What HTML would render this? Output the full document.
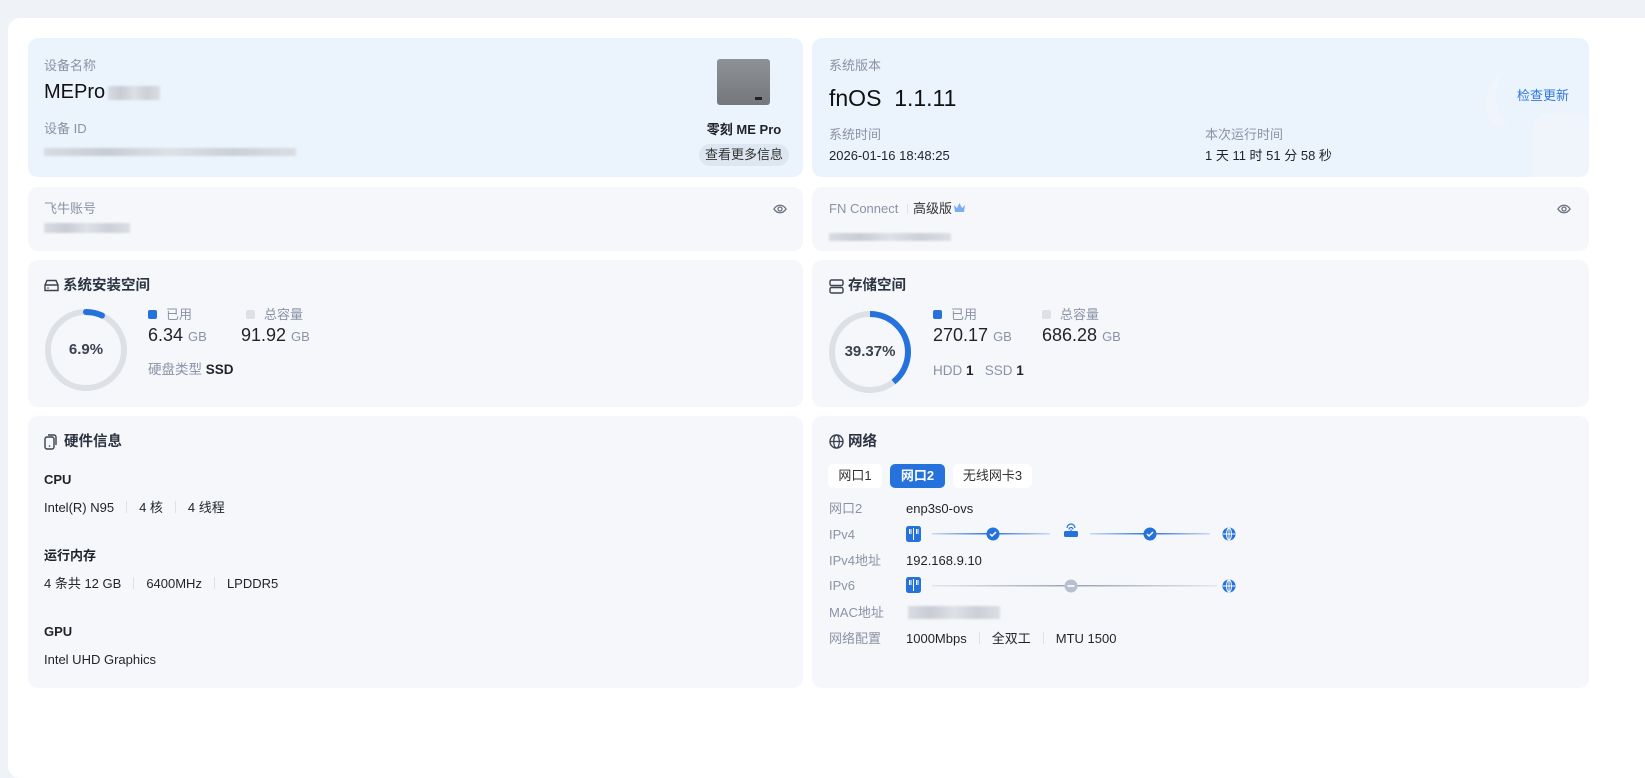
<!DOCTYPE html>
<html><head><meta charset="utf-8"><style>
*{margin:0;padding:0;box-sizing:border-box}
body{width:1645px;height:717px;background:#eff2f7;font-family:"Liberation Sans","Noto Sans CJK SC",sans-serif;color:#1f2329;position:relative;overflow:hidden}
.wrap{position:absolute;left:8px;top:18px;width:1700px;height:760px;background:#fff;border-radius:12px}
.card{position:absolute;background:#f5f7fb;border-radius:10px}
.blue{background:#ebf3fc}
.a{position:absolute;white-space:nowrap;line-height:18px}
.lbl{color:#8a93a6;font-size:13px}
.val{color:#1f2329;font-size:13px}
.ttl{font-size:14.5px;font-weight:bold;color:#2b3340}
.blur{position:absolute;height:10px;background:linear-gradient(90deg,#d6d9df,#c4c8d0,#dcdfe4,#c8ccd3,#d9dce1);filter:blur(1px);opacity:.9}
.sep{display:inline-block;width:1px;height:12px;background:#dde1e8;margin:0 12px;vertical-align:-1px}
.tab{position:absolute;top:464px;height:24px;background:#fff;border-radius:5px;font-size:13px;line-height:24px;text-align:center;color:#333}
</style></head><body>
<div class="wrap"></div>

<!-- top left -->
<div class="card blue" style="left:28px;top:38px;width:775px;height:139px"></div>
<div class="a lbl" style="left:44px;top:57px">设备名称</div>
<div class="a" style="left:44px;top:80px;font-size:20px;line-height:24px;color:#111">MEPro</div>
<div class="blur" style="left:108px;top:86px;width:52px;height:14px"></div>
<div class="a lbl" style="left:44px;top:120px">设备 ID</div>
<div class="blur" style="left:44px;top:148px;width:252px;height:8px"></div>
<div class="a" style="left:717px;top:59px;width:53px;height:46px;background:linear-gradient(#8e9196,#74777c);border-radius:3px"></div>
<div class="a" style="left:755px;top:97px;width:7px;height:3px;background:#222"></div>
<div class="a" style="left:700px;top:121px;width:88px;text-align:center;font-size:13px;font-weight:bold">零刻 ME Pro</div>
<div class="a" style="left:699px;top:144px;width:90px;height:22px;background:#dde6f1;border-radius:11px;font-size:13px;line-height:22px;text-align:center;color:#333">查看更多信息</div>

<!-- top right -->
<div class="card blue" style="left:812px;top:38px;width:777px;height:139px;overflow:hidden">
<svg style="position:absolute;left:640px;top:30px" width="140" height="110"><path d="M48 6 C30 20 28 50 45 58 L56 55 C40 45 44 20 48 6Z" fill="#f0f5fc"/><rect x="80" y="45" width="60" height="80" rx="18" fill="#f0f5fc"/></svg>
</div>
<div class="a lbl" style="left:829px;top:57px">系统版本</div>
<div class="a" style="left:829px;top:84px;font-size:23px;line-height:28px;color:#111">fnOS&nbsp;&nbsp;1.1.11</div>
<div class="a" style="left:1517px;top:87px;font-size:13px;color:#2f78e0">检查更新</div>
<div class="a lbl" style="left:829px;top:126px">系统时间</div>
<div class="a val" style="left:829px;top:147px">2026-01-16 18:48:25</div>
<div class="a lbl" style="left:1205px;top:126px">本次运行时间</div>
<div class="a val" style="left:1205px;top:147px">1 天 11 时 51 分 58 秒</div>

<!-- row 2 -->
<div class="card" style="left:28px;top:187px;width:775px;height:64px"></div>
<div class="a lbl" style="left:44px;top:200px">飞牛账号</div>
<div class="blur" style="left:44px;top:223px;width:86px"></div>
<svg class="a" style="left:773px;top:203px" width="14" height="12" viewBox="0 0 14 12"><path d="M1 6 C4 1 10 1 13 6 C10 11 4 11 1 6Z" fill="none" stroke="#6b7280" stroke-width="1.3"/><circle cx="7" cy="6" r="2" fill="none" stroke="#6b7280" stroke-width="1.3"/></svg>
<div class="card" style="left:812px;top:187px;width:777px;height:64px"></div>
<div class="a lbl" style="left:829px;top:200px">FN Connect <span class="sep" style="margin:0 5px;height:10px"></span><span style="color:#333">高级版</span></div>
<svg class="a" style="left:953px;top:202px" width="13" height="12"><path d="M1 3 L4 6 L6.5 1 L9 6 L12 3 L11 10 L2 10Z" fill="#7aaef0"/></svg>
<div class="blur" style="left:829px;top:233px;width:122px;height:8px"></div>
<svg class="a" style="left:1557px;top:203px" width="14" height="12" viewBox="0 0 14 12"><path d="M1 6 C4 1 10 1 13 6 C10 11 4 11 1 6Z" fill="none" stroke="#6b7280" stroke-width="1.3"/><circle cx="7" cy="6" r="2" fill="none" stroke="#6b7280" stroke-width="1.3"/></svg>

<!-- row 3 left -->
<div class="card" style="left:28px;top:260px;width:775px;height:147px"></div>
<svg class="a" style="left:44px;top:279px" width="15" height="13"><path d="M1 6 L3 1.5 H12 L14 6 V11.5 H1Z M1 6 H14" fill="none" stroke="#3a4250" stroke-width="1.4"/><circle cx="4" cy="9" r=".8" fill="#3a4250"/></svg>
<div class="a ttl" style="left:63px;top:277px">系统安装空间</div>
<svg class="a" style="left:44px;top:308px" width="84" height="84"><circle cx="42" cy="42" r="38" fill="none" stroke="#dde1e6" stroke-width="6"/><circle cx="42" cy="42" r="38" fill="none" stroke="#2672dc" stroke-width="6" stroke-linecap="round" stroke-dasharray="16.5 300" transform="rotate(-90 42 42)"/></svg>
<div class="a" style="left:44px;top:341px;width:84px;text-align:center;font-size:15px;font-weight:bold;color:#3a4250">6.9%</div>
<div class="a" style="left:148px;top:310px;width:9px;height:9px;background:#2672dc;border-radius:2px"></div>
<div class="a lbl" style="left:166px;top:306px">已用</div>
<div class="a" style="left:148px;top:324px;font-size:18px;line-height:22px">6.34 <span style="font-size:13px;color:#8a93a6">GB</span></div>
<div class="a" style="left:246px;top:310px;width:9px;height:9px;background:#dde0e5;border-radius:2px"></div>
<div class="a lbl" style="left:264px;top:306px">总容量</div>
<div class="a" style="left:241px;top:324px;font-size:18px;line-height:22px">91.92 <span style="font-size:13px;color:#8a93a6">GB</span></div>
<div class="a lbl" style="left:148px;top:361px;font-size:13.5px">硬盘类型 <span style="color:#1f2329;font-weight:bold">SSD</span></div>

<!-- row 3 right -->
<div class="card" style="left:812px;top:260px;width:777px;height:147px"></div>
<svg class="a" style="left:829px;top:279px" width="15" height="15"><rect x="1" y="1" width="13" height="5.5" rx="1.5" fill="none" stroke="#3a4250" stroke-width="1.4"/><rect x="1" y="8.5" width="13" height="5.5" rx="1.5" fill="none" stroke="#3a4250" stroke-width="1.4"/></svg>
<div class="a ttl" style="left:848px;top:277px">存储空间</div>
<svg class="a" style="left:828px;top:310px" width="84" height="84"><circle cx="42" cy="42" r="38" fill="none" stroke="#dde1e6" stroke-width="6"/><circle cx="42" cy="42" r="38" fill="none" stroke="#2672dc" stroke-width="6" stroke-dasharray="94 300" transform="rotate(-90 42 42)"/></svg>
<div class="a" style="left:828px;top:343px;width:84px;text-align:center;font-size:15px;font-weight:bold;color:#3a4250">39.37%</div>
<div class="a" style="left:933px;top:310px;width:9px;height:9px;background:#2672dc;border-radius:2px"></div>
<div class="a lbl" style="left:951px;top:306px">已用</div>
<div class="a" style="left:933px;top:324px;font-size:18px;line-height:22px">270.17 <span style="font-size:13px;color:#8a93a6">GB</span></div>
<div class="a" style="left:1042px;top:310px;width:9px;height:9px;background:#dde0e5;border-radius:2px"></div>
<div class="a lbl" style="left:1060px;top:306px">总容量</div>
<div class="a" style="left:1042px;top:324px;font-size:18px;line-height:22px">686.28 <span style="font-size:13px;color:#8a93a6">GB</span></div>
<div class="a lbl" style="left:933px;top:362px;font-size:13.5px">HDD <b style="color:#1f2329">1</b>&nbsp;&nbsp;&nbsp;SSD <b style="color:#1f2329">1</b></div>

<!-- row 4 left -->
<div class="card" style="left:28px;top:416px;width:775px;height:272px"></div>
<svg class="a" style="left:44px;top:434px" width="13" height="16"><rect x="1" y="3" width="9" height="12" rx="2" fill="none" stroke="#3a4250" stroke-width="1.4"/><path d="M4 1 H10 A2 2 0 0 1 12 3 V11" fill="none" stroke="#3a4250" stroke-width="1.4"/><circle cx="5.5" cy="12" r=".8" fill="#3a4250"/></svg>
<div class="a ttl" style="left:64px;top:433px">硬件信息</div>
<div class="a" style="left:44px;top:471px;font-size:13px;font-weight:bold">CPU</div>
<div class="a val" style="left:44px;top:499px">Intel(R) N95<span class="sep"></span>4 核<span class="sep"></span>4 线程</div>
<div class="a" style="left:44px;top:547px;font-size:13px;font-weight:bold">运行内存</div>
<div class="a val" style="left:44px;top:575px">4 条共 12 GB<span class="sep"></span>6400MHz<span class="sep"></span>LPDDR5</div>
<div class="a" style="left:44px;top:623px;font-size:13px;font-weight:bold">GPU</div>
<div class="a val" style="left:44px;top:651px">Intel UHD Graphics</div>

<!-- row 4 right -->
<div class="card" style="left:812px;top:416px;width:777px;height:272px"></div>
<svg class="a" style="left:829px;top:434px" width="15" height="15"><circle cx="7.5" cy="7.5" r="6.5" fill="none" stroke="#3a4250" stroke-width="1.4"/><ellipse cx="7.5" cy="7.5" rx="2.8" ry="6.5" fill="none" stroke="#3a4250" stroke-width="1.3"/><path d="M1 7.5H14" stroke="#3a4250" stroke-width="1.3"/></svg>
<div class="a ttl" style="left:848px;top:433px">网络</div>
<div class="tab" style="left:828px;width:54px">网口1</div>
<div class="tab" style="left:890px;width:55px;background:#2672dc;color:#fff;font-weight:bold">网口2</div>
<div class="tab" style="left:953px;width:79px">无线网卡3</div>
<div class="a lbl" style="left:829px;top:500px">网口2</div><div class="a val" style="left:906px;top:500px">enp3s0-ovs</div>
<div class="a lbl" style="left:829px;top:526px">IPv4</div>
<div class="a lbl" style="left:829px;top:552px">IPv4地址</div><div class="a val" style="left:906px;top:552px">192.168.9.10</div>
<div class="a lbl" style="left:829px;top:577px">IPv6</div>
<div class="a lbl" style="left:829px;top:604px">MAC地址</div>
<div class="blur" style="left:908px;top:606px;width:92px;height:13px"></div>
<div class="a lbl" style="left:829px;top:630px">网络配置</div>
<div class="a val" style="left:906px;top:630px">1000Mbps<span class="sep"></span>全双工<span class="sep"></span>MTU 1500</div>
<svg class="a" style="left:900px;top:520px" width="340" height="80">
<defs><linearGradient id="g1"><stop offset="0" stop-color="#c9daf5"/><stop offset=".5" stop-color="#2672dc"/><stop offset="1" stop-color="#c9daf5"/></linearGradient>
<linearGradient id="g2"><stop offset="0" stop-color="#e3e6ec"/><stop offset=".5" stop-color="#9aa2b3"/><stop offset="1" stop-color="#e3e6ec"/></linearGradient></defs>
<g fill="#2672dc"><rect x="6" y="6" width="15" height="16" rx="2.5"/></g><path d="M13.5 8V20M9.5 9V14M11 9V14M16.5 9V14M18 9V14" stroke="#fff" stroke-width="1"/>
<rect x="32" y="13" width="118" height="1.5" fill="url(#g1)"/><circle cx="93" cy="14" r="6.5" fill="#2672dc"/><path d="M90 14l2 2 4-4" stroke="#fff" stroke-width="1.5" fill="none"/>
<rect x="164" y="11" width="14" height="6" rx="1.5" fill="#2672dc"/><path d="M167 8a4 4 0 0 1 8 0M169 9.5a2 2 0 0 1 4 0M171 9.5V11" stroke="#2672dc" stroke-width="1.2" fill="none"/>
<rect x="190" y="13" width="120" height="1.5" fill="url(#g1)"/><circle cx="250" cy="14" r="6.5" fill="#2672dc"/><path d="M247 14l2 2 4-4" stroke="#fff" stroke-width="1.5" fill="none"/>
<circle cx="329" cy="14" r="6.5" fill="#2672dc"/><path d="M323 14H335M329 8V20" stroke="#fff" stroke-width="1"/><ellipse cx="329" cy="14" rx="2.5" ry="6" fill="none" stroke="#fff" stroke-width="1"/>
<rect x="6" y="57" width="15" height="16" rx="2.5" fill="#2672dc"/><path d="M13.5 59V71M9.5 60V65M11 60V65M16.5 60V65M18 60V65" stroke="#fff" stroke-width="1"/>
<rect x="32" y="65" width="285" height="1.5" fill="url(#g2)"/><circle cx="171" cy="66" r="6.5" fill="#b6c0cf"/><path d="M167.5 66H174.5" stroke="#fff" stroke-width="1.6"/>
<circle cx="329" cy="66" r="6.5" fill="#2672dc"/><path d="M323 66H335M329 60V72" stroke="#fff" stroke-width="1"/><ellipse cx="329" cy="66" rx="2.5" ry="6" fill="none" stroke="#fff" stroke-width="1"/>
</svg>
</body></html>
